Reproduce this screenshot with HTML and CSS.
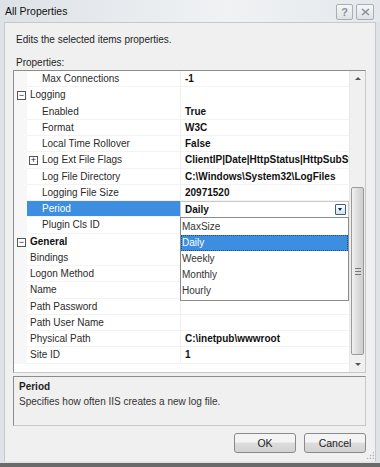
FILE: index.html
```html
<!doctype html>
<html lang="en">
 <head>
  <meta charset="UTF-8">
  <title>All Properties</title>
  <link rel="stylesheet" href="styles.css">
 </head>
 <body>
  <div class="window">
   <div class="titlebar">
    <span class="title">All Properties</span>
    <div class="caption-btns">
     <span class="cap-btn">?</span>
     <span class="cap-btn close">
      <svg width="9" height="8" viewBox="0 0 9 8"><path d="M1 1 L8 7 M8 1 L1 7" stroke="#8a9098" stroke-width="1.6" fill="none"/></svg>
     </span>
    </div>
   </div>

   <div class="client">
    <p class="intro">Edits the selected items properties.</p>
    <div class="caption">Properties:</div>

    <div class="grid-box">
     <div class="rows">
      <div class="row"><span class="margin"></span><span class="name lvl2">Max Connections</span><span class="value">-1</span></div>
      <div class="row cat"><span class="margin"><i class="tog">&minus;</i></span><span class="name lvl1">Logging</span><span class="value"></span></div>
      <div class="row"><span class="margin"></span><span class="name lvl2">Enabled</span><span class="value">True</span></div>
      <div class="row"><span class="margin"></span><span class="name lvl2">Format</span><span class="value">W3C</span></div>
      <div class="row"><span class="margin"></span><span class="name lvl2">Local Time Rollover</span><span class="value">False</span></div>
      <div class="row"><span class="margin"></span><span class="name lvl2"><i class="tog sub">+</i>Log Ext File Flags</span><span class="value">ClientIP|Date|HttpStatus|HttpSubStatus</span></div>
      <div class="row"><span class="margin"></span><span class="name lvl2">Log File Directory</span><span class="value">C:\Windows\System32\LogFiles</span></div>
      <div class="row"><span class="margin"></span><span class="name lvl2">Logging File Size</span><span class="value">20971520</span></div>
      <div class="row selected"><span class="margin"></span><span class="name lvl2">Period</span><span class="value editor">Daily<i class="drop-btn"></i></span></div>
      <div class="row"><span class="margin"></span><span class="name lvl2">Plugin Cls ID</span><span class="value"></span></div>
      <div class="row cat"><span class="margin"><i class="tog">&minus;</i></span><span class="name lvl1 bold">General</span><span class="value"></span></div>
      <div class="row"><span class="margin"></span><span class="name lvl1">Bindings</span><span class="value"></span></div>
      <div class="row"><span class="margin"></span><span class="name lvl1">Logon Method</span><span class="value"></span></div>
      <div class="row"><span class="margin"></span><span class="name lvl1">Name</span><span class="value"></span></div>
      <div class="row"><span class="margin"></span><span class="name lvl1">Path Password</span><span class="value"></span></div>
      <div class="row"><span class="margin"></span><span class="name lvl1">Path User Name</span><span class="value"></span></div>
      <div class="row"><span class="margin"></span><span class="name lvl1">Physical Path</span><span class="value">C:\inetpub\wwwroot</span></div>
      <div class="row"><span class="margin"></span><span class="name lvl1">Site ID</span><span class="value">1</span></div>
     </div>

     <div class="scrollbar">
      <span class="arrow up"></span>
      <div class="track"><div class="thumb"><span class="grip"></span></div></div>
      <span class="arrow down"></span>
     </div>

     <ul class="dropdown">
      <li>MaxSize</li>
      <li class="current">Daily</li>
      <li>Weekly</li>
      <li>Monthly</li>
      <li>Hourly</li>
     </ul>
    </div>

    <div class="desc">
     <div class="desc-title">Period</div>
     <div class="desc-text">Specifies how often IIS creates a new log file.</div>
    </div>

    <div class="buttons">
     <button>OK</button>
     <button>Cancel</button>
    </div>
    <span class="sizer"></span>
   </div>
  </div>
 </body>
</html>
```

FILE: styles.css
```css
body {
    margin: 0;
    font-family: "Liberation Sans", Arial, sans-serif;
    font-size: 10px;
    color: #1e1e1e;
}
.window {
    width: 380px;
    height: 467px;
    box-sizing: border-box;
    background: #dfe3e8;
    border-bottom: 4px solid #6a6a6a;
    display: flex;
    flex-direction: column;
    padding: 0 4px 1px 4px;
}
.titlebar {
    height: 22px;
    display: flex;
    align-items: center;
    justify-content: space-between;
    background: linear-gradient(to right, #dde2e7, #f0f2f4 60%, #e4e8ec);
    margin: 0 -4px;
    padding: 0 6px 0 5px;
}
.title {
    font-size: 10.5px;
    color: #111;
}
.caption-btns {
    display: flex;
    gap: 3px;
    padding-top: 1px;
}
.cap-btn {
    width: 15px;
    height: 14px;
    border: 1px solid #a9aeb4;
    border-radius: 2px;
    background: linear-gradient(#f6f7f8, #dfe2e5);
    color: #8a9098;
    font-size: 11px;
    font-weight: bold;
    line-height: 14px;
    text-align: center;
    display: flex;
    align-items: center;
    justify-content: center;
}
.cap-btn.close {
    width: 16px;
}
.client {
    flex: 1;
    background: #f0f0f0;
    border: 1px solid #c4c9ce;
    border-bottom-color: #e8e8e8;
    padding: 0 9px 0 8px;
    display: flex;
    flex-direction: column;
    position: relative;
}
.intro {
    margin: 8px 0 0 3px;
    height: 17px;
    line-height: 17px;
}
.caption {
    margin: 7px 0 0 3px;
    height: 15px;
    line-height: 15px;
}
.grid-box {
    position: relative;
    height: 301px;
    border: 1px solid #8c8c8c;
    border-color: #8c8c8c #c8c8c8 #c8c8c8 #8c8c8c;
    background: #fff;
    display: flex;
}
.rows {
    width: 335px;
}
.row {
    height: 16.25px;
    display: flex;
    line-height: 16px;
}
.margin {
    width: 13px;
    flex: none;
    background: #f7f7f7;
    position: relative;
}
.name {
    width: 153px;
    flex: none;
    box-sizing: border-box;
    white-space: nowrap;
    color: #2a2a2a;
    border-bottom: 1px solid #f3f3f3;
    position: relative;
}
.lvl1 { padding-left: 3px; }
.lvl2 { padding-left: 15px; }
.bold { font-weight: bold; color: #111; }
.value {
    flex: 1;
    border-left: 1px solid #efefef;
    border-bottom: 1px solid #f3f3f3;
    padding-left: 4px;
    font-weight: bold;
    color: #111;
    white-space: nowrap;
    overflow: hidden;
    position: relative;
}
.cat .name, .cat .value {
    border-bottom-color: #fff;
}
.tog {
    position: absolute;
    left: 3px;
    top: 4px;
    width: 7px;
    height: 7px;
    border: 1px solid #555;
    font-style: normal;
    font-size: 9px;
    line-height: 7px;
    text-align: center;
    color: #222;
    background: #fff;
}
.tog.sub {
    left: 2px;
}
.selected .name {
    background: #3d8ee0;
    color: #fff;
}
.editor {
    border: 1px solid #c8c8c8;
    border-bottom: none;
}
.drop-btn {
    position: absolute;
    right: 2px;
    top: 2px;
    width: 9px;
    height: 9px;
    border: 1px solid #3c5d7a;
    border-radius: 1px;
    background: linear-gradient(#fbfcfd, #d7e2ec);
}
.drop-btn::after {
    content: "";
    position: absolute;
    left: 2px;
    top: 3px;
    border-left: 2.5px solid transparent;
    border-right: 2.5px solid transparent;
    border-top: 3px solid #1a2a3a;
}
.scrollbar {
    width: 16px;
    display: flex;
    flex-direction: column;
    background: #f0f0f0;
    border-left: 1px solid #e8e8e8;
}
.arrow {
    height: 16px;
    position: relative;
}
.arrow::after {
    content: "";
    position: absolute;
    left: 5px;
    border-left: 3px solid transparent;
    border-right: 3px solid transparent;
}
.arrow.up::after {
    top: 6px;
    border-bottom: 3px solid #555;
}
.arrow.down::after {
    top: 7px;
    border-top: 3px solid #555;
}
.track {
    flex: 1;
    display: flex;
    flex-direction: column;
    justify-content: flex-end;
    padding-bottom: 1px;
}
.thumb {
    height: 166px;
    margin: 0 1px 0 1px;
    border: 1px solid #9a9a9a;
    border-radius: 2px;
    background: linear-gradient(to right, #f1f1f1, #dadada 55%, #cfcfcf);
    display: flex;
    align-items: center;
    justify-content: center;
}
.grip {
    width: 6px;
    height: 5px;
    border-top: 1px solid #777;
    border-bottom: 1px solid #777;
    position: relative;
}
.grip::after {
    content: "";
    position: absolute;
    left: 0;
    right: 0;
    top: 2px;
    border-top: 1px solid #777;
}
.dropdown {
    position: absolute;
    left: 166px;
    top: 146px;
    width: 167px;
    margin: 0;
    padding: 1px 0;
    list-style: none;
    background: #fff;
    border: 1px solid #8c8c8c;
}
.dropdown li {
    height: 16px;
    line-height: 16px;
    padding-left: 1px;
    color: #333;
}
.dropdown li.current {
    background: #3d8ee0;
    color: #fff;
    outline: 1px dotted #1c4f86;
    outline-offset: -1px;
}
.desc {
    margin-top: 3px;
    height: 46px;
    border: 1px solid #8c8c8c;
    border-color: #8c8c8c #c8c8c8 #c8c8c8 #8c8c8c;
    padding: 1px 5px;
}
.desc-title {
    font-weight: bold;
    line-height: 15px;
    margin-top: 1px;
}
.desc-text {
    line-height: 16px;
    color: #333;
}
.buttons {
    display: flex;
    justify-content: flex-end;
    gap: 8px;
    margin-top: 7px;
}
.buttons button {
    width: 62px;
    height: 20px;
    font-family: inherit;
    font-size: 10.5px;
    color: #222;
    border: 1px solid #8a8a8a;
    border-radius: 3px;
    background: linear-gradient(#f4f4f4 45%, #dcdcdc 50%, #d2d2d2);
    padding: 0;
}
.sizer {
    position: absolute;
    right: 1px;
    bottom: 2px;
    width: 8px;
    height: 8px;
    background: radial-gradient(circle, #b0b0b0 40%, transparent 50%) 0 0 / 3px 3px;
    clip-path: polygon(100% 0, 100% 100%, 0 100%);
}
```
